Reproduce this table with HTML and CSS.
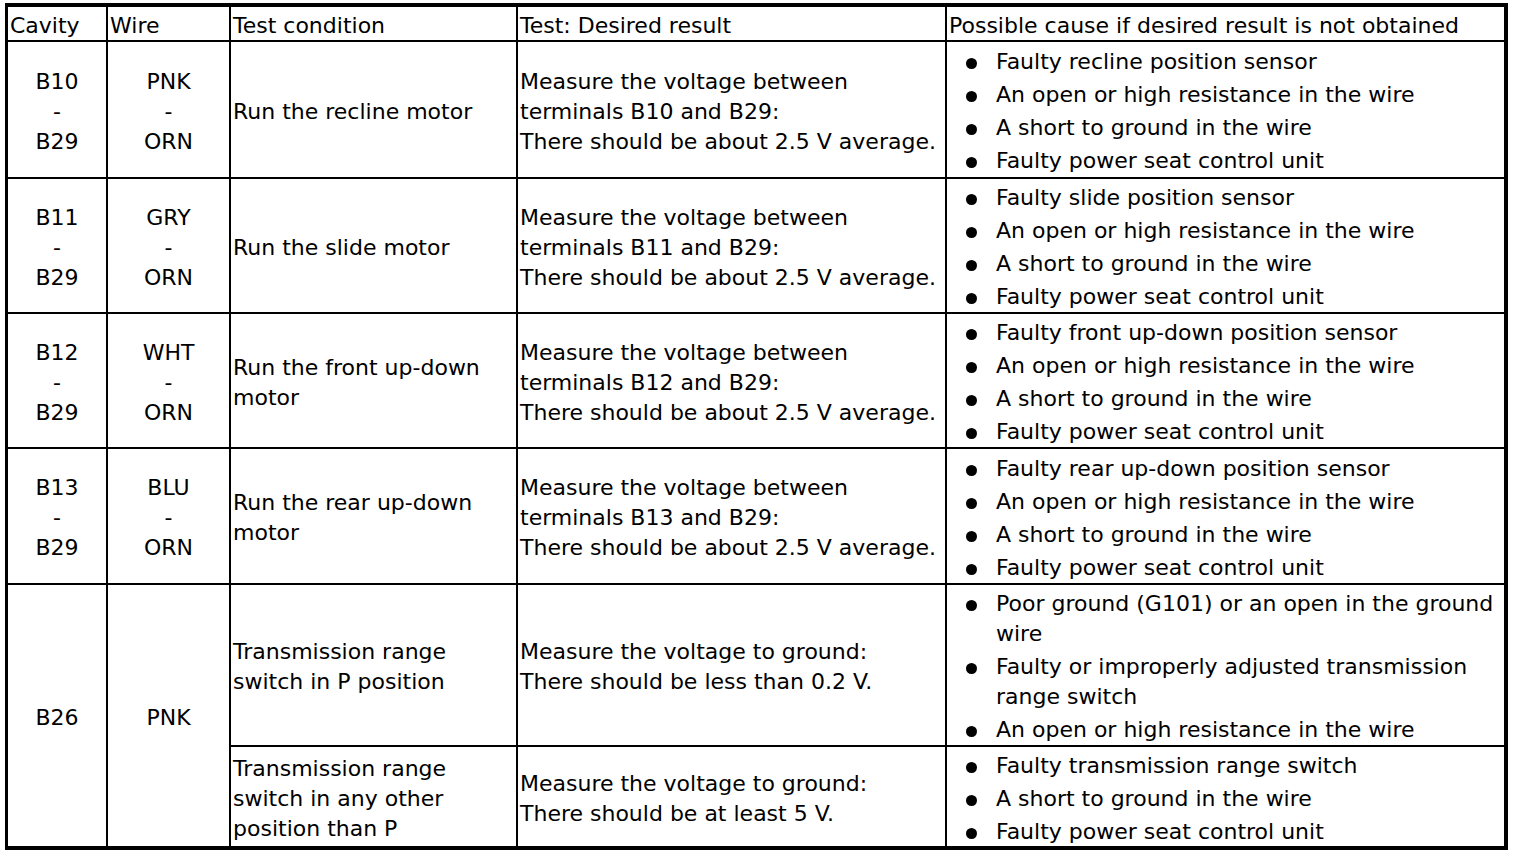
FILE: index.html
```html
<!DOCTYPE html>
<html lang="en">
<head>
<meta charset="utf-8">
<title>Power seat sensor test</title>
<link rel="stylesheet" href="styles.css">
</head>
<body>
<div class="sheet">
  <div class="cell head">Cavity</div>
  <div class="cell head">Wire</div>
  <div class="cell head">Test condition</div>
  <div class="cell head">Test: Desired result</div>
  <div class="cell head">Possible cause if desired result is not obtained</div>

  <div class="cell center">B10<br>-<br>B29</div>
  <div class="cell center">PNK<br>-<br>ORN</div>
  <div class="cell">Run the recline motor</div>
  <div class="cell">Measure the voltage between<br>terminals B10 and B29:<br>There should be about 2.5 V average.</div>
  <div class="cell"><ul class="causes">
    <li>Faulty recline position sensor</li>
    <li>An open or high resistance in the wire</li>
    <li>A short to ground in the wire</li>
    <li>Faulty power seat control unit</li>
  </ul></div>

  <div class="cell center">B11<br>-<br>B29</div>
  <div class="cell center">GRY<br>-<br>ORN</div>
  <div class="cell">Run the slide motor</div>
  <div class="cell">Measure the voltage between<br>terminals B11 and B29:<br>There should be about 2.5 V average.</div>
  <div class="cell"><ul class="causes">
    <li>Faulty slide position sensor</li>
    <li>An open or high resistance in the wire</li>
    <li>A short to ground in the wire</li>
    <li>Faulty power seat control unit</li>
  </ul></div>

  <div class="cell center">B12<br>-<br>B29</div>
  <div class="cell center">WHT<br>-<br>ORN</div>
  <div class="cell">Run the front up-down<br>motor</div>
  <div class="cell">Measure the voltage between<br>terminals B12 and B29:<br>There should be about 2.5 V average.</div>
  <div class="cell"><ul class="causes">
    <li>Faulty front up-down position sensor</li>
    <li>An open or high resistance in the wire</li>
    <li>A short to ground in the wire</li>
    <li>Faulty power seat control unit</li>
  </ul></div>

  <div class="cell center">B13<br>-<br>B29</div>
  <div class="cell center">BLU<br>-<br>ORN</div>
  <div class="cell">Run the rear up-down<br>motor</div>
  <div class="cell">Measure the voltage between<br>terminals B13 and B29:<br>There should be about 2.5 V average.</div>
  <div class="cell"><ul class="causes">
    <li>Faulty rear up-down position sensor</li>
    <li>An open or high resistance in the wire</li>
    <li>A short to ground in the wire</li>
    <li>Faulty power seat control unit</li>
  </ul></div>

  <div class="cell center span2">B26</div>
  <div class="cell center span2">PNK</div>
  <div class="cell">Transmission range<br>switch in P position</div>
  <div class="cell">Measure the voltage to ground:<br>There should be less than 0.2 V.</div>
  <div class="cell"><ul class="causes">
    <li>Poor ground (G101) or an open in the ground<br>wire</li>
    <li>Faulty or improperly adjusted transmission<br>range switch</li>
    <li>An open or high resistance in the wire</li>
  </ul></div>

  <div class="cell">Transmission range<br>switch in any other<br>position than P</div>
  <div class="cell">Measure the voltage to ground:<br>There should be at least 5 V.</div>
  <div class="cell"><ul class="causes">
    <li>Faulty transmission range switch</li>
    <li>A short to ground in the wire</li>
    <li>Faulty power seat control unit</li>
  </ul></div>
</div>
</body>
</html>
```
FILE: styles.css
```css
html, body {
  margin: 0;
  padding: 0;
  background: #fff;
}

body {
  font-family: "DejaVu Sans", "Liberation Sans", Arial, sans-serif;
  font-size: 22px;
  line-height: 30px;
  color: #000;
}

.sheet {
  display: grid;
  grid-template-columns: 98px 121px 285px 427px 557px;
  grid-template-rows: 33px 135px 133px 133px 134px 160px 99px;
  gap: 2px;
  width: max-content;
  margin: 3px 0 0 5px;
  background: #000;
  border-style: solid;
  border-color: #000;
  border-width: 4px 4px 4px 3px;
}

.cell {
  background: #fff;
  display: flex;
  align-items: center;
  padding: 4px 2px 0;
  white-space: nowrap;
  overflow: hidden;
}

.head {
  padding-left: 2px;
}

.center {
  justify-content: center;
  text-align: center;
}

.span2 {
  grid-row: span 2;
}

.causes {
  list-style: none;
  margin: 0;
  padding: 0;
  display: flex;
  flex-direction: column;
  gap: 3px;
}

.causes li {
  display: flex;
  align-items: flex-start;
}

.causes li::before {
  content: "";
  flex: none;
  width: 11px;
  height: 11px;
  border-radius: 50%;
  background: #000;
  margin: 11px 19px 0 17px;
}
```
